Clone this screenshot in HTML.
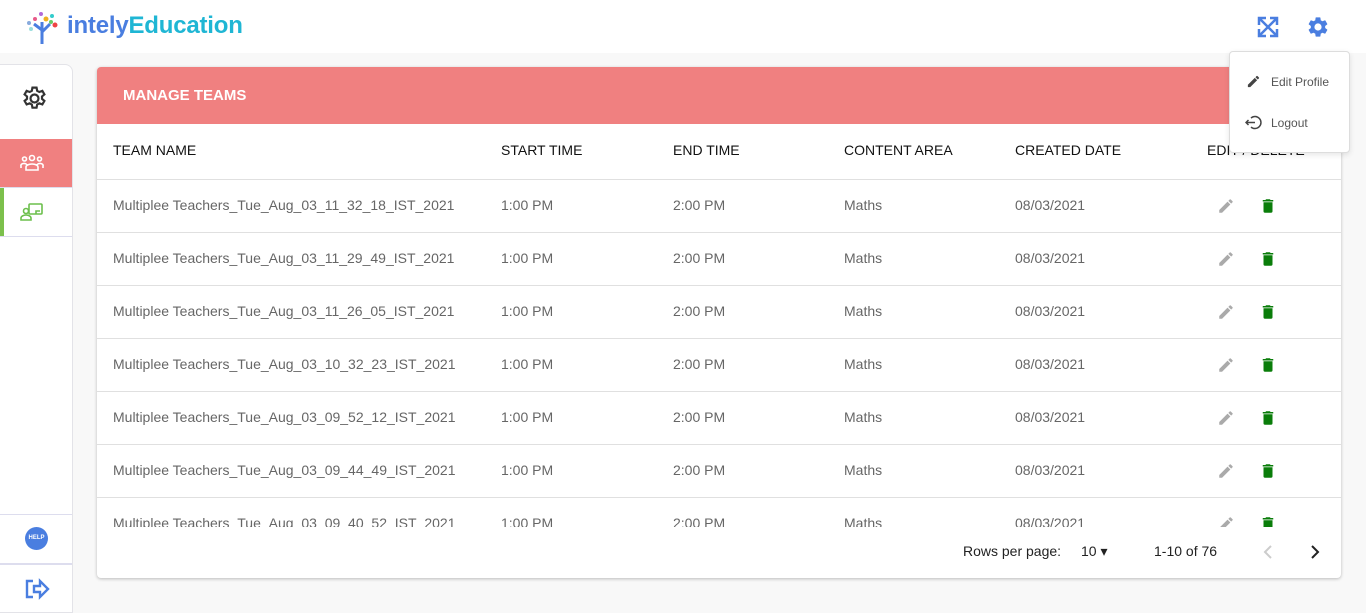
<!DOCTYPE html>
<html><head><meta charset="utf-8"><style>
*{box-sizing:border-box;margin:0;padding:0}
body{width:1366px;height:613px;overflow:hidden;background:#f8f8f8;font-family:"Liberation Sans",sans-serif;position:relative}
.hdr{position:absolute;left:0;top:0;width:1366px;height:53px;background:#fff}
.logo{position:absolute;left:67px;top:12px;font-size:24px;font-weight:bold;color:#4a7ee0;letter-spacing:-0.2px}
.logo span{color:#1fb6d4}
.side{position:absolute;left:0;top:64px;width:73px;height:549px;background:#fff;border:1px solid #e3e3e8;border-left:none;border-radius:0 8px 0 0}
.card{position:absolute;left:97px;top:67px;width:1244px;height:511px;background:#fff;border-radius:4px;box-shadow:0 1px 3px rgba(0,0,0,.25);overflow:hidden}
.ch{height:57px;background:#f08080;color:#fff;font-weight:bold;font-size:15px;padding:20px 26px}
.row{position:absolute;left:0;width:1244px;height:53px;border-bottom:1px solid #e0e0e0;font-size:14px;color:#666}
.row div{position:absolute;top:17px}
.row div.i{top:17px}
.th{color:#111;font-size:14px}
.c1{left:16px}.c2{left:404px}.c3{left:576px}.c4{left:747px}.c5{left:918px}.c6{left:1110px}
.menu{position:absolute;left:1229px;top:51px;width:121px;height:102px;background:#fff;border:1px solid #ddd;border-radius:4px;box-shadow:0 2px 6px rgba(0,0,0,.1);font-size:12px;color:#555}
</style></head><body>
<div class="hdr">
<svg style="position:absolute;left:24px;top:10px" width="40" height="34" viewBox="0 0 40 34"><path d="M18 34V20L10 14M18 22L26 14M18 20L18 12" stroke="#4a7ee0" stroke-width="3" fill="none"/><circle cx="17" cy="4" r="2" fill="#b36ad8"/><circle cx="11" cy="9" r="2" fill="#e85a8a"/><circle cx="22" cy="9" r="2.5" fill="#f0b020"/><circle cx="28" cy="6" r="2" fill="#3cc"/><circle cx="5" cy="13" r="2" fill="#8ad"/><circle cx="31" cy="15" r="2.5" fill="#e44"/><circle cx="27" cy="12" r="2" fill="#6c6"/><circle cx="7" cy="19" r="2" fill="#9dd"/></svg>
<div class="logo">intely<span>Education</span></div>
<svg style="position:absolute;left:1257px;top:16px" width="22" height="22" viewBox="0 0 22 22" fill="none" stroke="#4a7ee0" stroke-width="2.5"><path d="M2 2L20 20M20 2L2 20M2 9V2H9M13 2H20V9M20 13V20H13M9 20H2V13"/></svg>
<svg style="position:absolute;left:1306px;top:15px" width="24" height="24" viewBox="0 0 24 24"><path fill="#4a7ee0" d="M19.14 12.94c.04-.3.06-.61.06-.94 0-.32-.02-.64-.07-.94l2.03-1.58a.49.49 0 00.12-.61l-1.92-3.32a.49.49 0 00-.59-.22l-2.39.96a7 7 0 00-1.62-.94l-.36-2.54a.48.48 0 00-.48-.41h-3.84a.47.47 0 00-.47.41l-.36 2.54a7.3 7.3 0 00-1.62.94l-2.39-.96a.48.48 0 00-.59.22L2.74 8.87a.47.47 0 00.12.61l2.03 1.58c-.05.3-.09.63-.09.94s.02.64.07.94l-2.03 1.58a.49.49 0 00-.12.61l1.92 3.32c.12.22.37.29.59.22l2.39-.96c.5.38 1.03.7 1.62.94l.36 2.54c.05.24.24.41.48.41h3.84c.24 0 .44-.17.47-.41l.36-2.54a7 7 0 001.62-.94l2.39.96c.22.08.47 0 .59-.22l1.92-3.32a.47.47 0 00-.12-.61zM12 15.6A3.6 3.6 0 1112 8.4a3.6 3.6 0 010 7.2z"/></svg>
</div>
<div class="side">
<svg style="position:absolute;left:20px;top:19px" width="29" height="29" viewBox="0 0 24 24" fill="none" stroke="#333" stroke-width="1.8"><path d="M10.3 2h3.4l.5 2.6 1.8 1 2.5-.9 1.7 2.9-2 1.7v2l2 1.7-1.7 2.9-2.5-.9-1.8 1-.5 2.6h-3.4l-.5-2.6-1.8-1-2.5.9-1.7-2.9 2-1.7v-2l-2-1.7 1.7-2.9 2.5.9 1.8-1z" transform="translate(0 1)"/><circle cx="12" cy="12" r="3.3"/></svg>
<div style="position:absolute;left:0;top:74px;width:72px;height:48px;background:#f08080"></div>
<svg style="position:absolute;left:20px;top:88px" width="24" height="20" viewBox="0 0 24 20" fill="none" stroke="#fff" stroke-width="1.6"><circle cx="12" cy="5" r="2.5"/><circle cx="4.5" cy="6" r="2"/><circle cx="19.5" cy="6" r="2"/><path d="M6 17v-3a6 3 0 0112 0v3zM1 15v-2a3 2 0 016-1M23 15v-2a3 2 0 00-6-1"/></svg>
<div style="position:absolute;left:0;top:122px;width:72px;height:1px;background:#dde"></div>
<div style="position:absolute;left:0;top:123px;width:4px;height:48px;background:#7cc04c"></div>
<div style="position:absolute;left:0;top:171px;width:72px;height:1px;background:#dde"></div>
<svg style="position:absolute;left:20px;top:137px" width="24" height="20" viewBox="0 0 24 20" fill="none" stroke="#6cbf4c" stroke-width="1.6"><rect x="9" y="2" width="13" height="10" rx="1"/><circle cx="6" cy="9" r="2.5"/><path d="M1 18v-2a5 3 0 0110 0v2zM16 12v-3h4"/></svg>
<div style="position:absolute;left:0;top:449px;width:72px;height:1px;background:#dde"></div>
<div style="position:absolute;left:25px;top:462px;width:23px;height:23px;border-radius:50%;background:#4a7ee0;color:#fff;font-size:6px;font-weight:bold;text-align:center;line-height:23px">HELP</div>
<div style="position:absolute;left:0;top:498px;width:72px;height:2px;background:#dde"></div>
<svg style="position:absolute;left:24px;top:513px" width="26" height="22" viewBox="0 0 26 22" fill="none" stroke="#4a7ee0" stroke-width="2.4"><path d="M9 3H3v16h6M10 8h6V3l8 8-8 8v-5h-6z"/></svg>
</div>
<div class="card">
<div class="ch">MANAGE TEAMS</div>
<div style="position:absolute;top:57px;left:0;width:1244px;height:403px;overflow:hidden">
<div class="row th" style="top:0;height:56px;color:#111"><div class="c1" style="top:18px">TEAM NAME</div><div class="c2" style="top:18px">START TIME</div><div class="c3" style="top:18px">END TIME</div><div class="c4" style="top:18px">CONTENT AREA</div><div class="c5" style="top:18px">CREATED DATE</div><div class="c6" style="top:18px">EDIT / DELETE</div></div>
<div class="row" style="top:56px"><div class="c1">Multiplee Teachers_Tue_Aug_03_11_32_18_IST_2021</div><div class="c2">1:00 PM</div><div class="c3">2:00 PM</div><div class="c4">Maths</div><div class="c5">08/03/2021</div><div style="left:1120px"><svg width="18" height="18" viewBox="0 0 24 24"><path fill="#aaa" d="M3 17.25V21h3.75L17.8 9.94l-3.75-3.75zM20.7 7.04a1 1 0 000-1.41l-2.34-2.34a1 1 0 00-1.41 0l-1.83 1.83 3.75 3.75z"/></svg></div><div style="left:1162px"><svg width="18" height="18" viewBox="0 0 24 24"><path fill="#0a7d0a" d="M6 19a2 2 0 002 2h8a2 2 0 002-2V7H6zM19 4h-3.5l-1-1h-5l-1 1H5v2h14z"/></svg></div></div>
<div class="row" style="top:109px"><div class="c1">Multiplee Teachers_Tue_Aug_03_11_29_49_IST_2021</div><div class="c2">1:00 PM</div><div class="c3">2:00 PM</div><div class="c4">Maths</div><div class="c5">08/03/2021</div><div style="left:1120px"><svg width="18" height="18" viewBox="0 0 24 24"><path fill="#aaa" d="M3 17.25V21h3.75L17.8 9.94l-3.75-3.75zM20.7 7.04a1 1 0 000-1.41l-2.34-2.34a1 1 0 00-1.41 0l-1.83 1.83 3.75 3.75z"/></svg></div><div style="left:1162px"><svg width="18" height="18" viewBox="0 0 24 24"><path fill="#0a7d0a" d="M6 19a2 2 0 002 2h8a2 2 0 002-2V7H6zM19 4h-3.5l-1-1h-5l-1 1H5v2h14z"/></svg></div></div>
<div class="row" style="top:162px"><div class="c1">Multiplee Teachers_Tue_Aug_03_11_26_05_IST_2021</div><div class="c2">1:00 PM</div><div class="c3">2:00 PM</div><div class="c4">Maths</div><div class="c5">08/03/2021</div><div style="left:1120px"><svg width="18" height="18" viewBox="0 0 24 24"><path fill="#aaa" d="M3 17.25V21h3.75L17.8 9.94l-3.75-3.75zM20.7 7.04a1 1 0 000-1.41l-2.34-2.34a1 1 0 00-1.41 0l-1.83 1.83 3.75 3.75z"/></svg></div><div style="left:1162px"><svg width="18" height="18" viewBox="0 0 24 24"><path fill="#0a7d0a" d="M6 19a2 2 0 002 2h8a2 2 0 002-2V7H6zM19 4h-3.5l-1-1h-5l-1 1H5v2h14z"/></svg></div></div>
<div class="row" style="top:215px"><div class="c1">Multiplee Teachers_Tue_Aug_03_10_32_23_IST_2021</div><div class="c2">1:00 PM</div><div class="c3">2:00 PM</div><div class="c4">Maths</div><div class="c5">08/03/2021</div><div style="left:1120px"><svg width="18" height="18" viewBox="0 0 24 24"><path fill="#aaa" d="M3 17.25V21h3.75L17.8 9.94l-3.75-3.75zM20.7 7.04a1 1 0 000-1.41l-2.34-2.34a1 1 0 00-1.41 0l-1.83 1.83 3.75 3.75z"/></svg></div><div style="left:1162px"><svg width="18" height="18" viewBox="0 0 24 24"><path fill="#0a7d0a" d="M6 19a2 2 0 002 2h8a2 2 0 002-2V7H6zM19 4h-3.5l-1-1h-5l-1 1H5v2h14z"/></svg></div></div>
<div class="row" style="top:268px"><div class="c1">Multiplee Teachers_Tue_Aug_03_09_52_12_IST_2021</div><div class="c2">1:00 PM</div><div class="c3">2:00 PM</div><div class="c4">Maths</div><div class="c5">08/03/2021</div><div style="left:1120px"><svg width="18" height="18" viewBox="0 0 24 24"><path fill="#aaa" d="M3 17.25V21h3.75L17.8 9.94l-3.75-3.75zM20.7 7.04a1 1 0 000-1.41l-2.34-2.34a1 1 0 00-1.41 0l-1.83 1.83 3.75 3.75z"/></svg></div><div style="left:1162px"><svg width="18" height="18" viewBox="0 0 24 24"><path fill="#0a7d0a" d="M6 19a2 2 0 002 2h8a2 2 0 002-2V7H6zM19 4h-3.5l-1-1h-5l-1 1H5v2h14z"/></svg></div></div>
<div class="row" style="top:321px"><div class="c1">Multiplee Teachers_Tue_Aug_03_09_44_49_IST_2021</div><div class="c2">1:00 PM</div><div class="c3">2:00 PM</div><div class="c4">Maths</div><div class="c5">08/03/2021</div><div style="left:1120px"><svg width="18" height="18" viewBox="0 0 24 24"><path fill="#aaa" d="M3 17.25V21h3.75L17.8 9.94l-3.75-3.75zM20.7 7.04a1 1 0 000-1.41l-2.34-2.34a1 1 0 00-1.41 0l-1.83 1.83 3.75 3.75z"/></svg></div><div style="left:1162px"><svg width="18" height="18" viewBox="0 0 24 24"><path fill="#0a7d0a" d="M6 19a2 2 0 002 2h8a2 2 0 002-2V7H6zM19 4h-3.5l-1-1h-5l-1 1H5v2h14z"/></svg></div></div>
<div class="row" style="top:374px"><div class="c1">Multiplee Teachers_Tue_Aug_03_09_40_52_IST_2021</div><div class="c2">1:00 PM</div><div class="c3">2:00 PM</div><div class="c4">Maths</div><div class="c5">08/03/2021</div><div style="left:1120px"><svg width="18" height="18" viewBox="0 0 24 24"><path fill="#aaa" d="M3 17.25V21h3.75L17.8 9.94l-3.75-3.75zM20.7 7.04a1 1 0 000-1.41l-2.34-2.34a1 1 0 00-1.41 0l-1.83 1.83 3.75 3.75z"/></svg></div><div style="left:1162px"><svg width="18" height="18" viewBox="0 0 24 24"><path fill="#0a7d0a" d="M6 19a2 2 0 002 2h8a2 2 0 002-2V7H6zM19 4h-3.5l-1-1h-5l-1 1H5v2h14z"/></svg></div></div>
</div>
<div style="position:absolute;top:476px;left:866px;font-size:14px;color:#222">Rows per page:</div>
<div style="position:absolute;top:476px;left:984px;font-size:14px;color:#222">10 ▾</div>
<div style="position:absolute;top:476px;left:1057px;font-size:14px;color:#222">1-10 of 76</div>
<svg style="position:absolute;top:478px;left:1166px" width="10" height="14" viewBox="0 0 10 14"><path d="M8 1L2 7l6 6" stroke="#ccc" stroke-width="2" fill="none"/></svg>
<svg style="position:absolute;top:478px;left:1213px" width="10" height="14" viewBox="0 0 10 14"><path d="M2 1l6 6-6 6" stroke="#222" stroke-width="2" fill="none"/></svg>
</div>
<div class="menu">
<svg style="position:absolute;left:16px;top:22px" width="15" height="15" viewBox="0 0 24 24"><path fill="#444" d="M3 17.25V21h3.75L17.8 9.94l-3.75-3.75zM20.7 7.04a1 1 0 000-1.41l-2.34-2.34a1 1 0 00-1.41 0l-1.83 1.83 3.75 3.75z"/></svg>
<div style="position:absolute;left:41px;top:23px">Edit Profile</div>
<svg style="position:absolute;left:15px;top:63px" width="17" height="15" viewBox="0 0 17 15" fill="none" stroke="#444" stroke-width="1.5"><path d="M6 3a6 6 0 110 9M1 7.5h9M3.5 5L1 7.5 3.5 10"/></svg>
<div style="position:absolute;left:41px;top:64px">Logout</div>
</div>
</body></html>
